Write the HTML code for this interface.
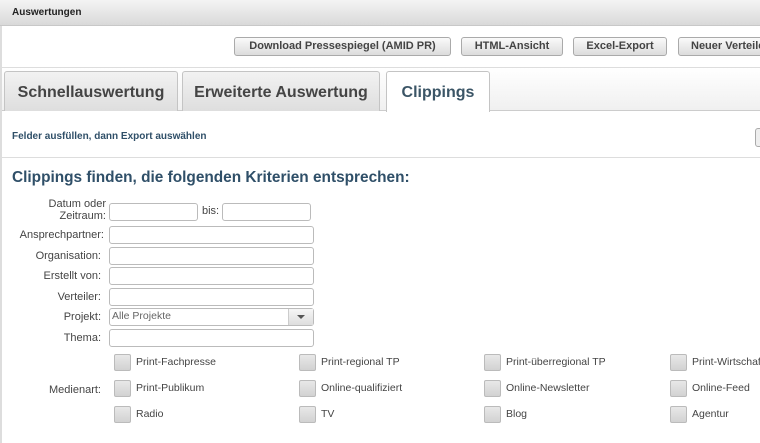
<!DOCTYPE html>
<html><head><meta charset="utf-8"><style>
*{box-sizing:border-box;margin:0;padding:0}
body{width:760px;height:443px;overflow:hidden;background:#fff;font-family:"Liberation Sans",Arial,sans-serif;position:relative}
.a{position:absolute}
.hdr{left:0;top:0;width:760px;height:26px;background:linear-gradient(#f4f4f4,#d9d9d9);border-bottom:1px solid #c8c8c8;font-size:10px;font-weight:bold;color:#222;padding:7px 0 0 12px}
.lb{left:0;top:26px;width:2px;height:417px;background:#ddd}
.btn{top:37px;height:19px;border:1px solid #aaa;border-radius:3px;background:linear-gradient(#fafafa,#dcdcdc);font-size:11px;font-weight:bold;color:#444;text-align:center;line-height:17px;white-space:nowrap;overflow:hidden}
.tabbar{left:2px;top:67px;width:758px;height:44px;background:linear-gradient(#fff,#f0f0f0);border-top:1px solid #ddd;border-bottom:1px solid #ccc}
.tab{top:71px;height:40px;border:1px solid #c4c4c4;border-bottom:none;border-radius:3px 3px 0 0;background:linear-gradient(#f2f2f2,#dedede);font-size:16px;font-weight:bold;color:#444;text-align:center;line-height:42px}
.lbl{font-size:11px;color:#444;text-align:right;width:101px;left:0}
.in{left:109px;width:205px;height:18px;border:1px solid #bbb;border-radius:3px;background:#fff}
.cb{width:17px;height:17px;border:1px solid #bbb;border-radius:2px;background:linear-gradient(#e8e8e8,#d2d2d2)}
.cl{font-size:10.5px;color:#444}
</style></head><body>
<div class="a hdr">Auswertungen</div>
<div class="a lb"></div>
<div class="a btn" style="left:234px;width:217px">Download Pressespiegel (AMID PR)</div>
<div class="a btn" style="left:461px;width:102px">HTML-Ansicht</div>
<div class="a btn" style="left:573px;width:94px">Excel-Export</div>
<div class="a btn" style="left:678px;width:90px;text-align:left;padding-left:12px">Neuer Verteiler</div>
<div class="a tabbar"></div>
<div class="a tab" style="left:4px;width:174px">Schnellauswertung</div>
<div class="a tab" style="left:182px;width:198px">Erweiterte Auswertung</div>
<div class="a tab" style="left:386px;width:104px;height:41px;background:#fff;color:#3b5566">Clippings</div>
<div class="a" style="left:12px;top:131px;font-size:10px;font-weight:bold;color:#2f4f68">Felder ausfüllen, dann Export auswählen</div>
<div class="a" style="left:755px;top:128px;width:10px;height:19px;border:1px solid #aaa;border-radius:3px;background:#eee"></div>
<div class="a" style="left:2px;top:157px;width:758px;height:1px;background:#ddd"></div>
<div class="a" style="left:12px;top:169px;font-size:15.4px;font-weight:bold;color:#2f4f68">Clippings finden, die folgenden Kriterien entsprechen:</div>
<div class="a lbl" style="top:198px;width:106px;line-height:12px">Datum oder<br>Zeitraum:</div>
<div class="a in" style="top:203px;width:89px"></div>
<div class="a lbl" style="left:202px;top:205px;width:auto;text-align:left">bis:</div>
<div class="a in" style="left:222px;top:203px;width:89px"></div>
<div class="a lbl" style="top:229px;width:104px">Ansprechpartner:</div><div class="a in" style="top:226px"></div>
<div class="a lbl" style="top:250px">Organisation:</div><div class="a in" style="top:247px"></div>
<div class="a lbl" style="top:270px">Erstellt von:</div><div class="a in" style="top:267px"></div>
<div class="a lbl" style="top:291px">Verteiler:</div><div class="a in" style="top:288px"></div>
<div class="a lbl" style="top:311px">Projekt:</div>
<div class="a in" style="top:308px;font-size:10.5px;color:#666;padding:1px 0 0 2px">Alle Projekte<div class="a" style="right:0;top:0;width:25px;height:16px;border-left:1px solid #ccc;background:linear-gradient(#f6f6f6,#ddd)"><div class="a" style="left:8px;top:6px;border-left:4px solid transparent;border-right:4px solid transparent;border-top:4px solid #555"></div></div></div>
<div class="a lbl" style="top:332px">Thema:</div><div class="a in" style="top:329px"></div>
<div class="a lbl" style="top:384px">Medienart:</div>
<div class="a cb" style="left:114px;top:354px"></div><div class="a cl" style="left:136px;top:356px">Print-Fachpresse</div>
<div class="a cb" style="left:299px;top:354px"></div><div class="a cl" style="left:321px;top:356px">Print-regional TP</div>
<div class="a cb" style="left:484px;top:354px"></div><div class="a cl" style="left:506px;top:356px">Print-überregional TP</div>
<div class="a cb" style="left:670px;top:354px"></div><div class="a cl" style="left:692px;top:356px;white-space:nowrap">Print-Wirtschaft</div>
<div class="a cb" style="left:114px;top:380px"></div><div class="a cl" style="left:136px;top:382px">Print-Publikum</div>
<div class="a cb" style="left:299px;top:380px"></div><div class="a cl" style="left:321px;top:382px">Online-qualifiziert</div>
<div class="a cb" style="left:484px;top:380px"></div><div class="a cl" style="left:506px;top:382px">Online-Newsletter</div>
<div class="a cb" style="left:670px;top:380px"></div><div class="a cl" style="left:692px;top:382px">Online-Feed</div>
<div class="a cb" style="left:114px;top:406px"></div><div class="a cl" style="left:136px;top:408px">Radio</div>
<div class="a cb" style="left:299px;top:406px"></div><div class="a cl" style="left:321px;top:408px">TV</div>
<div class="a cb" style="left:484px;top:406px"></div><div class="a cl" style="left:506px;top:408px">Blog</div>
<div class="a cb" style="left:670px;top:406px"></div><div class="a cl" style="left:692px;top:408px">Agentur</div>
</body></html>
